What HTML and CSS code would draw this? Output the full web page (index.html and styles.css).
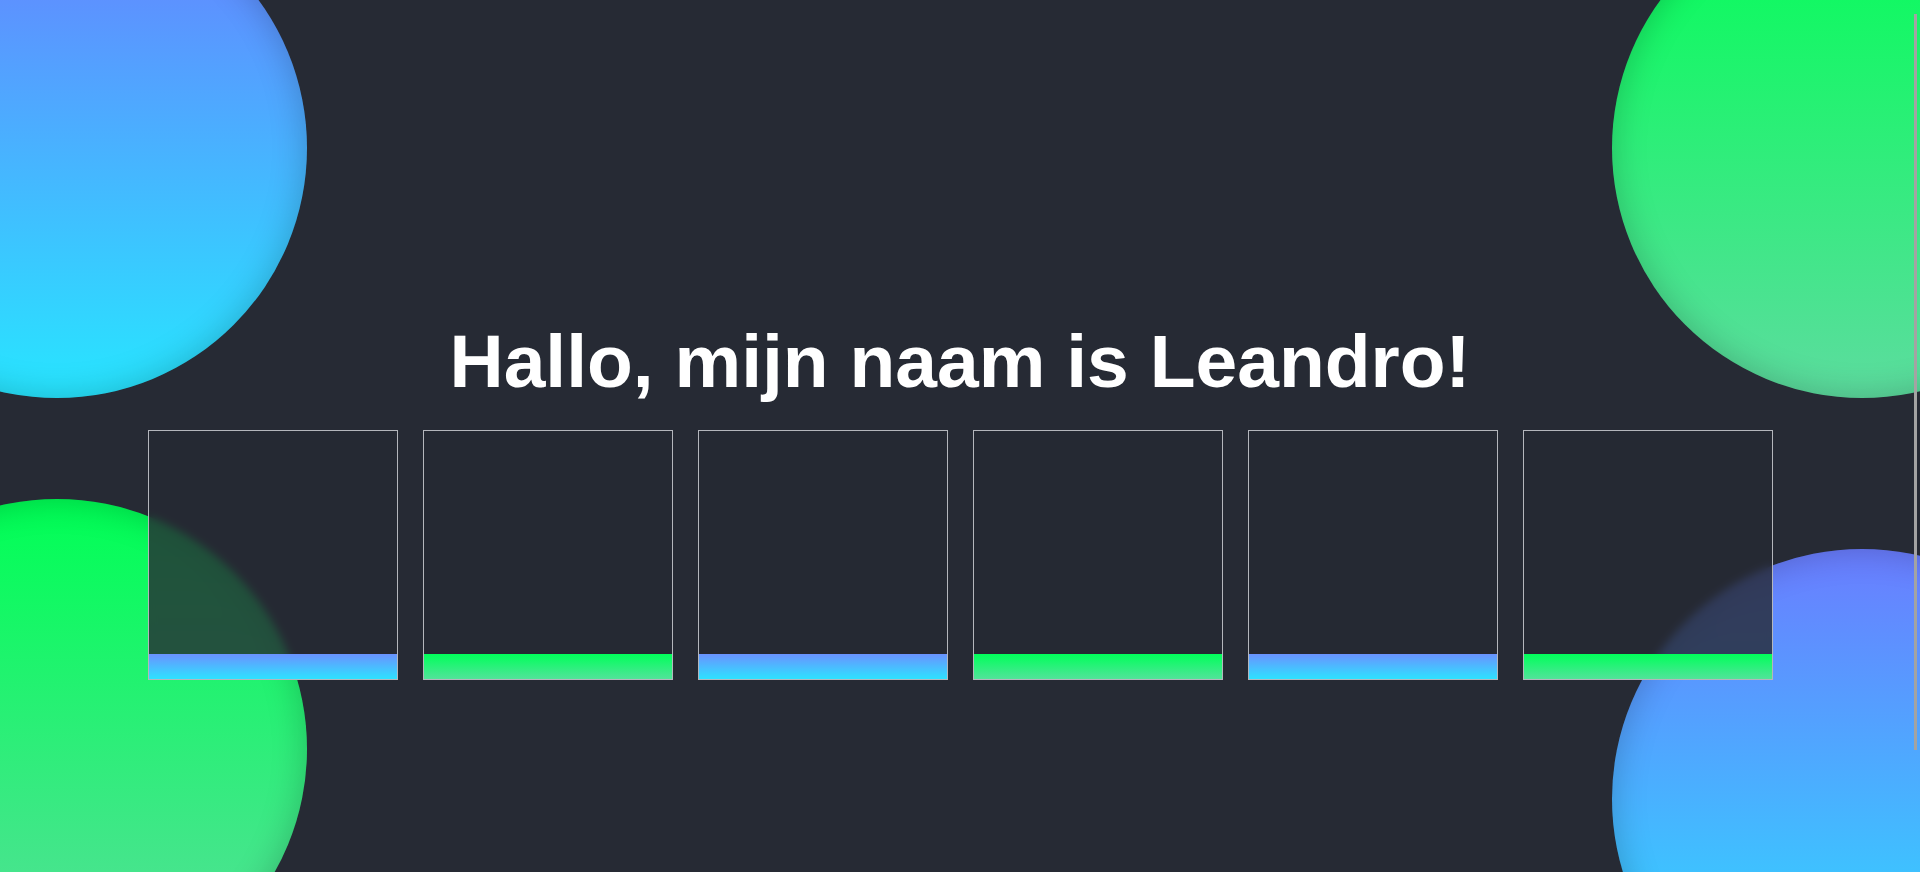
FILE: index.html
```html
<!DOCTYPE html>
<html lang="nl">
<head>
<meta charset="utf-8">
<title>Leandro</title>
<link rel="stylesheet" href="styles.css">
</head>
<body>
<div class="page">
  <div class="blob blob-blue blob-tl"></div>
  <div class="blob blob-green blob-bl"></div>
  <div class="blob blob-green blob-tr"></div>
  <div class="blob blob-blue blob-br"></div>

  <main class="content">
    <h1 class="title">Hallo, mijn naam is Leandro!</h1>
    <div class="cards">
      <div class="card"><div class="bar bar-blue"></div></div>
      <div class="card"><div class="bar bar-green"></div></div>
      <div class="card"><div class="bar bar-blue"></div></div>
      <div class="card"><div class="bar bar-green"></div></div>
      <div class="card"><div class="bar bar-blue"></div></div>
      <div class="card"><div class="bar bar-green"></div></div>
    </div>
  </main>

  <div class="scroll-thumb"></div>
</div>
</body>
</html>
```
FILE: styles.css
```css
html, body {
  margin: 0;
  padding: 0;
  height: 100%;
  background: #262a34;
  overflow: hidden;
}

.page {
  position: relative;
  width: 100%;
  height: 100vh;
  overflow: hidden;
  font-family: "Liberation Sans", Arial, sans-serif;
}

.blob {
  position: absolute;
  width: 500px;
  height: 500px;
  border-radius: 50%;
  box-shadow: inset 0 0 34px rgba(0, 0, 0, 0.22);
  z-index: 0;
}

.blob-blue {
  background: linear-gradient(to bottom, #6a7dff, #27e6ff);
}

.blob-green {
  background: linear-gradient(to bottom, #00ff55, #5ddc9f);
}

.blob-tl { left: -193px; top: -102px; }
.blob-bl { left: -193px; top: 499px; }
.blob-tr { left: 1612px; top: -102px; }
.blob-br { left: 1612px; top: 549px; }

.content {
  position: relative;
  z-index: 1;
  display: flex;
  flex-direction: column;
  align-items: center;
  gap: 26px;
  padding-top: 318px;
}

.title {
  margin: 0;
  color: #ffffff;
  font-size: 75px;
  line-height: 1.15;
  font-weight: 700;
}

.cards {
  display: flex;
  gap: 25px;
}

.card {
  box-sizing: border-box;
  width: 250px;
  height: 250px;
  border: 1px solid #b4b6bc;
  background: rgba(37, 41, 51, 0.8);
  backdrop-filter: blur(4px);
  display: flex;
  flex-direction: column;
  justify-content: flex-end;
}

.bar {
  height: 25px;
}

.bar-blue {
  background: linear-gradient(to bottom, #6a92ff, #2ee2ff);
}

.bar-green {
  background: linear-gradient(to bottom, #00ff5a, #52e39a);
}

.scroll-thumb {
  position: absolute;
  right: 3px;
  top: 14px;
  width: 3px;
  height: 736px;
  background: #a3a3a3;
  z-index: 2;
}
```
